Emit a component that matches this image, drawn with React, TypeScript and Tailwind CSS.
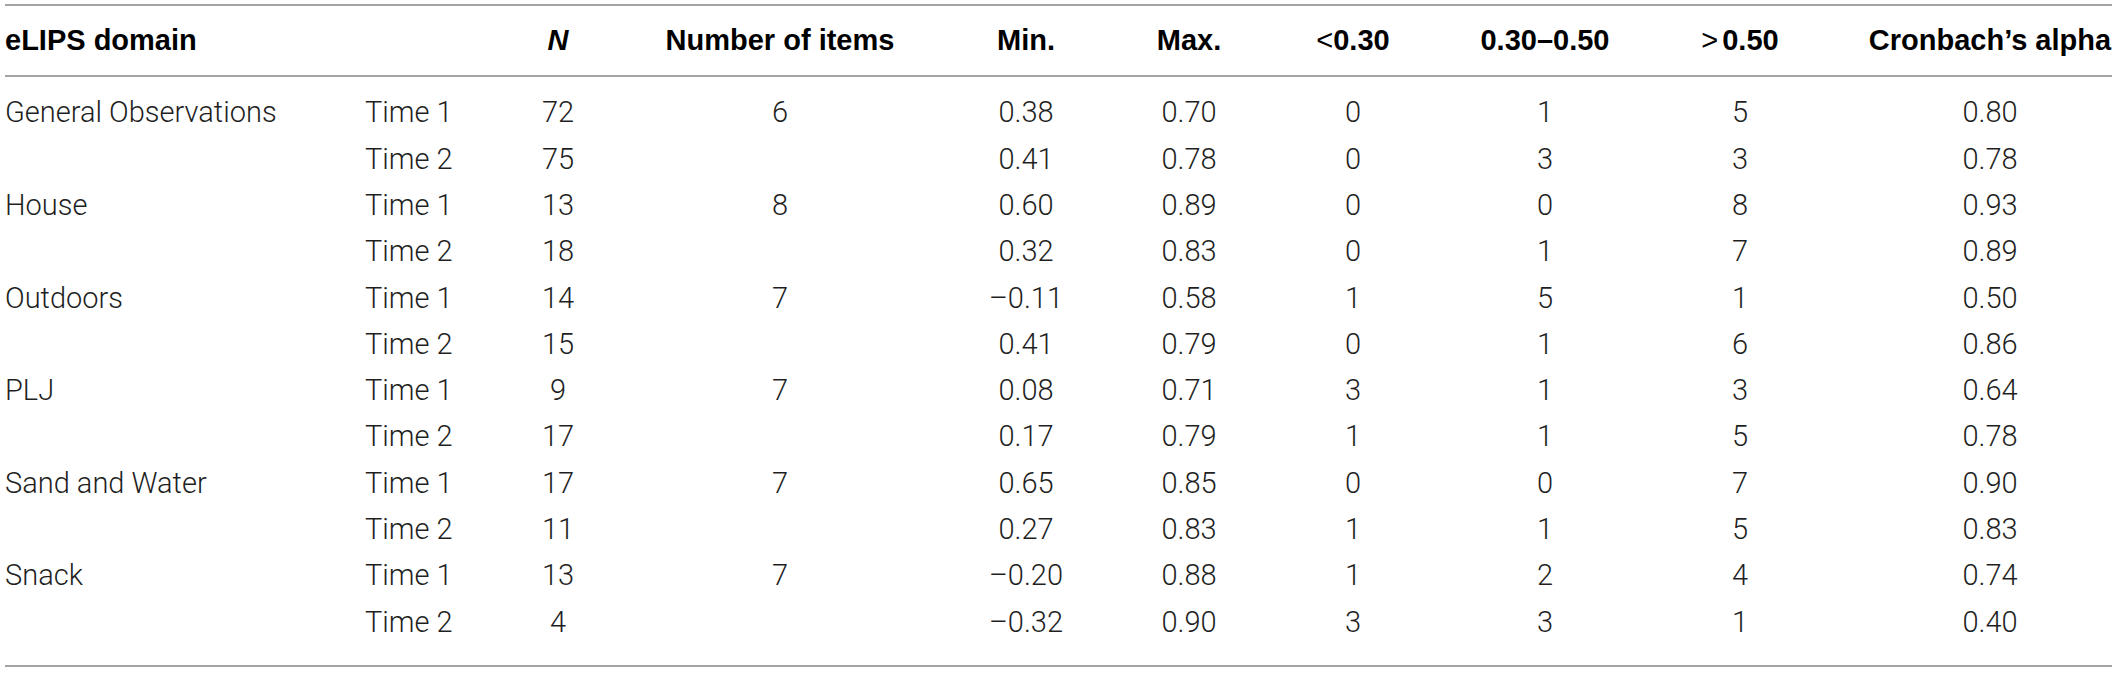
const rows: string[][] = [
  ["General Observations", "Time 1", "72", "6", "0.38", "0.70", "0", "1", "5", "0.80"],
  ["", "Time 2", "75", "", "0.41", "0.78", "0", "3", "3", "0.78"],
  ["House", "Time 1", "13", "8", "0.60", "0.89", "0", "0", "8", "0.93"],
  ["", "Time 2", "18", "", "0.32", "0.83", "0", "1", "7", "0.89"],
  ["Outdoors", "Time 1", "14", "7", "–0.11", "0.58", "1", "5", "1", "0.50"],
  ["", "Time 2", "15", "", "0.41", "0.79", "0", "1", "6", "0.86"],
  ["PLJ", "Time 1", "9", "7", "0.08", "0.71", "3", "1", "3", "0.64"],
  ["", "Time 2", "17", "", "0.17", "0.79", "1", "1", "5", "0.78"],
  ["Sand and Water", "Time 1", "17", "7", "0.65", "0.85", "0", "0", "7", "0.90"],
  ["", "Time 2", "11", "", "0.27", "0.83", "1", "1", "5", "0.83"],
  ["Snack", "Time 1", "13", "7", "–0.20", "0.88", "1", "2", "4", "0.74"],
  ["", "Time 2", "4", "", "–0.32", "0.90", "3", "3", "1", "0.40"],
];

const cols = "grid grid-cols-[360px_93px_200px_244px_248px_78px_250px_134px_256px_244px]";

const App = () => {
  return (
    <div className="w-[2117px] h-[674px] bg-white px-[5px] pt-[4px] text-[29px] text-[#1f1f1f]">
      <div className="border-t-2 border-b-2 border-[#a3a3a3]">
        {/* header */}
        <div className={`${cols} h-[71px] items-center border-b-2 border-[#a3a3a3] font-['Liberation_Sans',Arial,sans-serif] font-bold text-black whitespace-nowrap`}>
          <div>eLIPS domain</div>
          <div />
          <div className="text-center italic">N</div>
          <div className="text-center">Number of items</div>
          <div className="text-center">Min.</div>
          <div className="text-center">Max.</div>
          <div className="text-center">
            <span className="font-normal">&lt;</span>0.30
          </div>
          <div className="text-center">0.30–0.50</div>
          <div className="text-center">
            <span className="font-normal mr-[4px]">&gt;</span>0.50
          </div>
          <div className="text-center">Cronbach’s alpha</div>
        </div>

        {/* body */}
        <div className="pt-[13px] pb-[19px] font-['Roboto','Liberation_Sans',sans-serif] font-light">
          {rows.map((r, i) => (
            <div key={i} className={`${cols} h-[46.3px] items-center whitespace-nowrap`}>
              {r.map((c, j) => (
                <div key={j} className={j < 2 ? "text-left" : "text-center"}>
                  {c}
                </div>
              ))}
            </div>
          ))}
        </div>
      </div>
    </div>
  );
};

export default App;
